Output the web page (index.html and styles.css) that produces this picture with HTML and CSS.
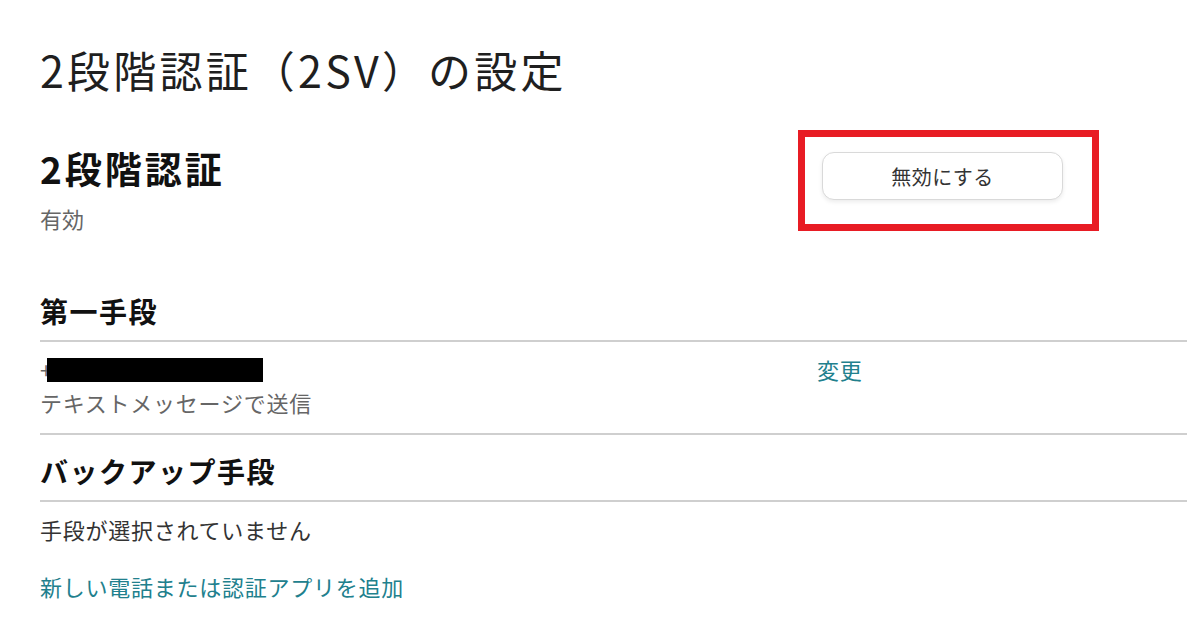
FILE: index.html
```html
<!DOCTYPE html>
<html lang="ja">
<head>
    <meta charset="UTF-8">
    <meta name="viewport" content="width=device-width, initial-scale=1.0">
    <title>2段階認証（2SV）の設定</title>
    <link rel="stylesheet" href="styles.css">
</head>
<body>
    <div class="container">
        <h1 class="page-title">2段階認証（2SV）の設定</h1>

        <!-- 状態と無効化ボタン -->
        <div class="status-row">
            <div>
                <h2 class="status-title">2段階認証</h2>
                <p class="status-text">有効</p>
            </div>
            <div class="status-action">
                <span class="highlight">
                    <button class="btn-outline">無効にする</button>
                </span>
            </div>
        </div>

        <!-- 第一手段 -->
        <section class="method">
            <h3 class="method-title">第一手段</h3>
            <div class="method-item">
                <div>
                    <div class="phone">+<span class="masked"></span></div>
                    <div class="method-sub">テキストメッセージで送信</div>
                </div>
                <div>
                    <a href="#" class="link">変更</a>
                </div>
            </div>
        </section>

        <!-- バックアップ手段 -->
        <section class="method backup">
            <h3 class="method-title">バックアップ手段</h3>
            <p class="empty-text">手段が選択されていません</p>
            <a href="#" class="link add-link">新しい電話または認証アプリを追加</a>
        </section>
    </div>
</body>
</html>
```

FILE: styles.css
```css
/* リセット */
* {
    margin: 0;
    padding: 0;
    box-sizing: border-box;
}

body {
    background: #FFFFFF;
    color: #333333;
    font-family: "Noto Sans CJK JP", "Noto Sans", sans-serif;
}

.container {
    padding: 0 13px 0 40px;
}

/* タイトル */
.page-title {
    font-size: 43px;
    font-weight: 400;
    line-height: 50px;
    letter-spacing: 3.2px;
    color: #1F1F1F;
    margin-top: 44px;
    margin-bottom: 52px;
}

/* 状態 */
.status-row {
    display: grid;
    grid-template-columns: 1fr 370px;
}

.status-title {
    font-size: 37px;
    font-weight: 700;
    line-height: 44px;
    letter-spacing: 3px;
    color: #111111;
}

.status-text {
    font-size: 22px;
    line-height: 30px;
    color: #666666;
    margin-top: 13px;
}

.status-action {
    padding-top: 6px;
    padding-left: 5px;
}

.highlight {
    position: relative;
    display: inline-block;
}

.highlight::after {
    content: "";
    position: absolute;
    top: -22px;
    left: -24px;
    right: -36px;
    bottom: -31px;
    border: 7px solid #E81C24;
    pointer-events: none;
}

.btn-outline {
    display: block;
    width: 241px;
    height: 48px;
    background: #FFFFFF;
    border: 1px solid #D9D9D9;
    border-radius: 12px;
    box-shadow: 0 2px 4px rgba(0, 0, 0, 0.08);
    font-family: inherit;
    font-size: 20px;
    letter-spacing: 0.5px;
    color: #333333;
    cursor: pointer;
}

/* 認証手段 */
.method {
    margin-top: 60px;
}

.method.backup {
    margin-top: 18px;
}

.method-title {
    font-size: 28px;
    font-weight: 700;
    line-height: 36px;
    letter-spacing: 1.5px;
    color: #111111;
    padding-bottom: 11px;
    border-bottom: 2px solid #CFCFCF;
}

.method-item {
    display: grid;
    grid-template-columns: 1fr 370px;
    padding: 11px 0 14px;
    border-bottom: 2px solid #CFCFCF;
    font-size: 22px;
    line-height: 33px;
    letter-spacing: 0.75px;
}

.phone {
    display: flex;
    align-items: center;
    color: #666666;
}

.masked {
    display: inline-block;
    width: 216px;
    height: 24px;
    margin-left: -6px;
    background: #000000;
}

.method-sub {
    color: #666666;
}

.link {
    color: #21808D;
    text-decoration: none;
}

.empty-text {
    font-size: 22px;
    line-height: 30px;
    letter-spacing: 0.75px;
    color: #333333;
    margin-top: 12px;
}

.add-link {
    display: block;
    font-size: 22px;
    line-height: 30px;
    letter-spacing: 0.75px;
    margin-top: 27px;
}
```
